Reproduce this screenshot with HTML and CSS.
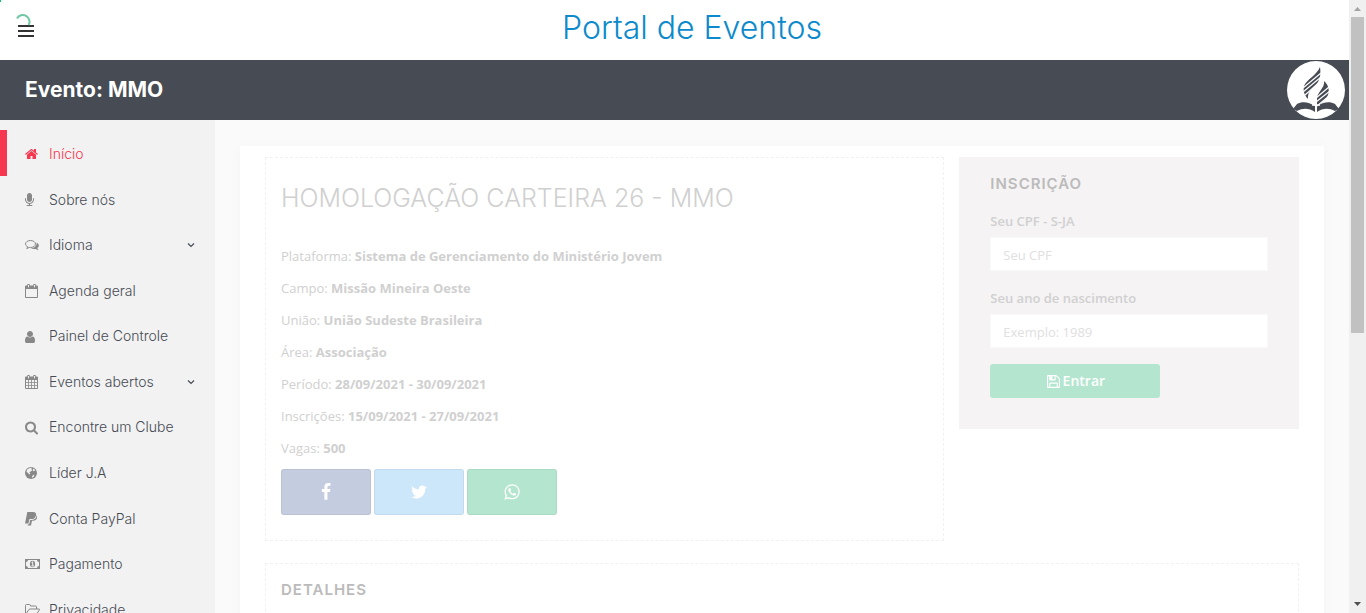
FILE: index.html
```html
<!DOCTYPE html>
<html lang="pt-BR">
<head>
<meta charset="utf-8">
<title>Portal de Eventos</title>
<link rel="stylesheet" href="styles.css">
</head>
<body>
<div class="page">
  <header class="topbar">
    <button class="menu-toggle" type="button" aria-label="Menu"><span></span><span></span><span></span></button>
    <a class="brand" href="#">Portal de Eventos</a>
    <div class="progress"></div>
    <svg class="spinner" viewBox="0 0 16 16" aria-hidden="true"><path d="M2 4.400A6.500 6.500 0 0 1 13.600 11" fill="none" stroke="#70c7a4" stroke-width="2"/></svg>
  </header>
  <div class="eventbar">
    <h1 class="event-name">Evento: MMO</h1>
    <svg class="logo" viewBox="0 0 58 58" role="img" aria-label="Igreja Adventista">
      <circle cx="29" cy="29" r="29" fill="#fff"/>
      <g fill="#474b54">
        <path d="M33 6C34 13 33 17 31 21C28 26 20 29 21 38C17 34 16 29 17 25C20 18 30 14 33 6Z"/>
        <path d="M37 20C42 24 43 31 40 36C37 41 31 43 30 49V37C31 30 38 27 37 20Z"/>
        <path d="M10 43C15 40 22 41 28 45V51C22 47 16 47 10 50L6 48Z"/>
        <path d="M48 43C43 40 36 41 30 45V51C36 47 42 47 48 50L52 48Z"/>
      </g>
      <g fill="none" stroke="#fff" stroke-width="1.200">
        <path d="M16 27L34 12M16 31L34 16M18 34L34 20"/>
        <path d="M29 37L42 26M29 41L43 30M30 45L42 35"/>
        <path d="M29 37V52M25 44H33" stroke-width="1.600"/>
      </g>
    </svg>
  </div>
  <div class="body">
    <nav class="sidebar">
      <a class="item active" href="#"><svg viewBox="64 0 1792 1792"><path d="M1472 992v480q0 26-19 45t-45 19h-384v-384h-256v384h-384q-26 0-45-19t-19-45v-480q0-1 .5-3t.5-3l575-474 575 474q1 2 1 6zm223-69l-62 74q-8 9-21 11h-3q-13 0-21-7l-692-577-692 577q-12 8-24 7-13-2-21-11l-62-74q-8-10-7-23.5t11-21.5l719-599q32-26 76-26t76 26l244 204v-195q0-14 9-23t23-9h192q14 0 23 9t9 23v408l219 182q10 8 11 21.5t-7 23.5z"/></svg><span>Início</span></a>
      <a class="item" href="#"><svg viewBox="320 0 1792 1792"><path d="M1472 704v128q0 221-147.500 384.500t-364.500 187.500v132h256q26 0 45 19t19 45-19 45-45 19h-640q-26 0-45-19t-19-45 19-45 45-19h256v-132q-217-24-364.500-187.500t-147.500-384.500v-128q0-26 19-45t45-19 45 19 19 45v128q0 185 131.500 316.500t316.500 131.500 316.500-131.500 131.500-316.500v-128q0-26 19-45t45-19 45 19 19 45zm-256-384v512q0 132-94 226t-226 94-226-94-94-226v-512q0-132 94-226t226-94 226 94 94 226z"/></svg><span>Sobre nós</span></a>
      <a class="item" href="#"><svg viewBox="0 0 14 14"><path d="M5.500 2.500C8.300 2.500 10.500 4.100 10.500 6S8.300 9.500 5.500 9.500L4.200 9.400L1.800 10.600L2.700 8.700C1.400 8.100.5 7.100.5 6C.5 4.100 2.700 2.500 5.500 2.500Z" fill="none" stroke="currentColor"/><path d="M11.700 4.500C14.300 5.900 14.600 8.700 12.300 10.100L13.500 12.200L10.400 10.900C8.500 11.200 6.700 10.900 5.500 10.200C9 10.400 12 8 11.700 4.500Z"/></svg><span>Idioma</span><svg class="chevron" viewBox="0 0 8 8"><path d="M1 2.500L4 5.500L7 2.500" fill="none" stroke="#474b54" stroke-width="1.200"/></svg></a>
      <a class="item" href="#"><svg viewBox="0 0 14 14"><path fill-rule="evenodd" d="M0 2.500Q0 1.500 1 1.500H12Q13 1.500 13 2.500V13Q13 14 12 14H1Q0 14 0 13ZM1 5V13H12V5Z"/><path d="M3.500 1V3.500M9.500 1V3.500" stroke="currentColor" stroke-width="2.600" stroke-linecap="round"/><path d="M3.500 1V3.300M9.500 1V3.300" stroke="#f2f2f2"/></svg><span>Agenda geral</span></a>
      <a class="item" href="#"><svg viewBox="256 0 1792 1792"><path d="M1536 1399q0 109-62.500 187t-150.500 78h-854q-88 0-150.500-78t-62.500-187q0-85 8.500-160.500t31.500-152 58.500-131 94-89 134.500-34.500q131 128 313 128t313-128q76 0 134.500 34.500t94 89 58.500 131 31.500 152 8.500 160.500zm-256-887q0 159-112.500 271.500t-271.500 112.500-271.500-112.500-112.500-271.500 112.500-271.500 271.500-112.500 271.500 112.500 112.500 271.500z"/></svg><span>Painel de Controle</span></a>
      <a class="item" href="#"><svg viewBox="0 0 14 14"><path fill-rule="evenodd" d="M0 2.500Q0 1.500 1 1.500H12Q13 1.500 13 2.500V13Q13 14 12 14H1Q0 14 0 13ZM1 5V7H3.200V5ZM4 5V7H6.200V5ZM7 5V7H9.200V5ZM10 5V7H12V5ZM1 7.800V10H3.200V7.800ZM4 7.800V10H6.200V7.800ZM7 7.800V10H9.200V7.800ZM10 7.800V10H12V7.800ZM1 10.800V13H3.200V10.800ZM4 10.800V13H6.200V10.800ZM7 10.800V13H9.200V10.800ZM10 10.800V13H12V10.800Z"/><path d="M3.500 1V3.500M9.500 1V3.500" stroke="currentColor" stroke-width="2.600" stroke-linecap="round"/><path d="M3.500 1V3.300M9.500 1V3.300" stroke="#f2f2f2"/></svg><span>Eventos abertos</span><svg class="chevron" viewBox="0 0 8 8"><path d="M1 2.500L4 5.500L7 2.500" fill="none" stroke="#474b54" stroke-width="1.200"/></svg></a>
      <a class="item" href="#"><svg viewBox="64 64 1792 1792"><path d="M1216 832q0-185-131.500-316.500t-316.500-131.500-316.500 131.500-131.500 316.500 131.500 316.500 316.500 131.500 316.500-131.500 131.500-316.500zm512 832q0 52-38 90t-90 38q-54 0-90-38l-343-342q-179 124-399 124-143 0-273.500-55.500t-225-150-150-225-55.500-273.500 55.500-273.500 150-225 225-150 273.500-55.500 273.500 55.500 225 150 150 225 55.500 273.500q0 220-124 399l343 343q37 37 37 90z"/></svg><span>Encontre um Clube</span></a>
      <a class="item" href="#"><svg viewBox="0 0 14 14"><circle cx="6" cy="7" r="6"/><path d="M4.200 2.200L7 1.700L6.200 3.300L7.400 4L5.800 5.500L4.200 6L5.200 7.200L4.500 8.500L1.500 5.400L2.200 3.600ZM8.500 2.500L10.300 4.200L8.800 5.200L7.700 4.400ZM7 10L9.300 8.400L9 10.500L7.200 11.800Z" fill="#f2f2f2"/></svg><span>Líder J.A</span></a>
      <a class="item" href="#"><svg viewBox="0 0 14 14"><path d="M2.300 0H8.200C10.500 0 11.500 1.400 11 3.500C10.500 6 8.800 7.100 6.300 7.100H4.500L3.500 11.500H0Z"/><path d="M11.700 3C13 6 11.300 8.700 8.200 8.700H7L6 13.500H2.600L2.900 12.200H4.200L5.200 7.900H6.800C9.800 7.900 11.700 6 11.700 3Z"/></svg><span>Conta PayPal</span></a>
      <a class="item" href="#"><svg class="wide" viewBox="0 0 15 14"><path fill-rule="evenodd" d="M0 2H15V12H0ZM3 3A2 2 0 0 1 1 5V9A2 2 0 0 1 3 11H12A2 2 0 0 1 14 9V5A2 2 0 0 1 12 3Z"/><ellipse cx="7.500" cy="7" rx="2.600" ry="3.200"/><path d="M6.500 5.500L7.700 4.800V8.700M6.300 9H9" fill="none" stroke="#f2f2f2"/></svg><span>Pagamento</span></a>
      <a class="item" href="#"><svg class="wide" viewBox="0 0 15 14"><path d="M.5 11V2.500Q.5 1.500 1.500 1.500H4.500Q5.500 1.500 5.500 3H10.500Q11.500 3 11.500 4V6M.8 11.500L3.500 7Q4 6 5 6H14Q15 6 14.300 7L12 10.500Q11.300 11.500 10.300 11.500H1.500Q.5 11.500.5 10.500" fill="none" stroke="currentColor"/></svg><span>Privacidade</span></a>
    </nav>
    <main class="content">
      <div class="card">
        <div class="columns">
          <section class="panel">
            <h2 class="title">HOMOLOGAÇÃO CARTEIRA 26 - MMO</h2>
            <p>Plataforma: <b>Sistema de Gerenciamento do Ministério Jovem</b></p>
            <p>Campo: <b>Missão Mineira Oeste</b></p>
            <p>União: <b>União Sudeste Brasileira</b></p>
            <p>Área: <b>Associação</b></p>
            <p>Período: <b>28/09/2021 - 30/09/2021</b></p>
            <p>Inscrições: <b>15/09/2021 - 27/09/2021</b></p>
            <p>Vagas: <b>500</b></p>
            <div class="share">
              <button class="share-btn facebook" type="button" aria-label="Facebook"><svg viewBox="0 0 1792 1792"><path d="M1343 12v264h-157q-86 0-116 36t-30 108v189h293l-39 296h-254v759h-306v-759h-255v-296h255v-218q0-186 104-288.500t277-102.500q147 0 228 12z"/></svg></button>
              <button class="share-btn twitter" type="button" aria-label="Twitter"><svg viewBox="0 0 1792 1792"><path d="M1684 408q-67 98-162 167 1 14 1 42 0 130-38 259.500t-115.500 248.500-184.500 210.500-258 146-323 54.500q-271 0-496-145 35 4 78 4 225 0 401-138-105-2-188-64.500t-114-159.500q33 5 61 5 43 0 85-11-112-23-185.500-111.500t-73.500-205.500v-4q68 38 146 41-66-44-105-115t-39-154q0-88 44-163 121 149 294.500 238.500t371.500 99.500q-8-38-8-74 0-134 94.500-228.500t228.500-94.500q140 0 236 102 109-21 205-78-37 115-142 178 93-10 186-50z"/></svg></button>
              <button class="share-btn whatsapp" type="button" aria-label="WhatsApp"><svg viewBox="0 0 1792 1792"><path d="M1113 974q13 0 97.500 44t89.500 53q2 5 2 15 0 33-17 76-16 39-71 65.500t-102 26.500q-57 0-190-62-98-45-170-118t-148-185q-72-107-71-194v-8q3-91 74-158 24-22 52-22 6 0 18 1.500t19 1.500q19 0 26.500 6.500t15.500 27.500q8 20 33 88t25 75q0 21-34.500 57.500t-34.500 46.500q0 7 5 15 34 73 102 137 56 53 151 101 12 7 22 7 15 0 54-48.500t52-48.500zm-203 530q127 0 243.500-50t200.500-134 134-200.500 50-243.500-50-243.500-134-200.500-200.500-134-243.500-50-243.500 50-200.500 134-134 200.500-50 243.500q0 203 120 368l-79 233 242-77q158 104 345 104zm0-1382q153 0 292.500 60t240.500 161 161 240.500 60 292.500-60 292.500-161 240.500-240.500 161-292.500 60q-195 0-365-94l-417 134 136-405q-108-178-108-389 0-153 60-292.500t161-240.500 240.500-161 292.500-60z"/></svg></button>
            </div>
          </section>
          <form class="signup">
            <h3 class="heading">INSCRIÇÃO</h3>
            <label for="cpf">Seu CPF - S-JA</label>
            <input id="cpf" type="text" placeholder="Seu CPF">
            <label for="year">Seu ano de nascimento</label>
            <input id="year" type="text" placeholder="Exemplo: 1989">
            <button class="submit" type="button"><svg viewBox="0 0 1792 1792"><path d="M512 1536h768v-384h-768v384zm896 0h128v-896q0-14-10-38.500t-20-34.500l-281-281q-10-10-34-20t-39-10v416q0 40-28 68t-68 28h-576q-40 0-68-28t-28-68v-416h-128v1280h128v-416q0-40 28-68t68-28h832q40 0 68 28t28 68v416zm-384-928v-320q0-13-9.500-22.500t-22.500-9.500h-192q-13 0-22.500 9.500t-9.500 22.500v320q0 13 9.500 22.500t22.500 9.500h192q13 0 22.500-9.500t9.500-22.500zm640 32v928q0 40-28 68t-68 28h-1344q-40 0-68-28t-28-68v-1344q0-40 28-68t68-28h928q40 0 88 20t76 48l280 280q28 28 48 76t20 88z"/></svg>Entrar</button>
          </form>
        </div>
        <section class="panel details">
          <h3 class="heading">DETALHES</h3>
        </section>
      </div>
    </main>
  </div>
</div>
<div class="scrollbar" aria-hidden="true">
  <svg viewBox="0 0 17 17"><path d="M5 11H12L8.500 7Z" fill="#a3a3a3"/></svg>
  <div class="track"><div class="thumb"></div></div>
  <svg viewBox="0 0 17 17"><path d="M5 6H12L8.500 10Z" fill="#505050"/></svg>
</div>
</body>
</html>
```

FILE: styles.css
```css
* { box-sizing: border-box; }
body {
  margin: 0;
  height: 100vh;
  display: flex;
  overflow: hidden;
  background: #fafafa;
  font: 13px/20px "Open Sans", sans-serif;
  color: #d0d0d0;
}
h1, h2, h3, p { margin: 0; }
a { text-decoration: none; }
svg { display: block; fill: currentColor; flex: none; }
button { border: 0; padding: 0; font: inherit; }

.page { flex: 1; min-width: 0; display: flex; flex-direction: column; }

.topbar {
  position: relative;
  height: 60px;
  flex: none;
  display: grid;
  grid-template-columns: 1fr auto 1fr;
  background: #fff;
}
.menu-toggle {
  justify-self: start;
  align-self: start;
  margin: 25px 0 0 18px;
  display: grid;
  gap: 3px;
  width: 16px;
  background: none;
}
.menu-toggle span { height: 2px; background: #333; }
.brand {
  grid-column: 2;
  padding-top: 8px;
  padding-left: 35px;
  font: 300 32px/40px Inter, sans-serif;
  color: #0d8acb;
}
.progress {
  position: absolute;
  top: 0;
  left: 0;
  width: 1px;
  height: 2px;
  background: #29b67a;
  box-shadow: 0 0 4px #29b67a;
}
.spinner { position: absolute; top: 14px; left: 15px; width: 16px; height: 16px; }

.eventbar {
  height: 60px;
  flex: none;
  display: flex;
  align-items: center;
  justify-content: space-between;
  padding: 0 4px 0 25px;
  background: #474b54;
}
.event-name { font: 700 21px/28px Inter, sans-serif; color: #fff; }
.logo { width: 58px; height: 58px; }

.body { flex: 1; min-height: 0; display: flex; overflow: hidden; }
.sidebar { width: 215px; flex: none; padding-top: 10px; background: #f2f2f2; }
.item {
  display: flex;
  align-items: center;
  gap: 10px;
  padding: 15px 20px 12px 25px;
  font: 300 14px/1.327 Inter, sans-serif;
  color: #474b54;
}
.item svg { width: 14px; height: 14px; color: #888; }
.item svg.wide { width: 15px; margin-right: -1px; }
.item svg.chevron { width: 8px; height: 8px; margin-left: auto; }
.item.active { padding-left: 18px; border-left: 7px solid #f7364f; color: #f7364f; }
.item.active svg { color: #f7364f; }

.content { flex: 1; min-width: 0; padding: 26px 25px 0; }
.card {
  height: 800px;
  padding: 11px 25px;
  background: #fff;
  box-shadow: 0 1px 10px #f5f5f5;
}
.columns { display: grid; grid-template-columns: 2fr 1fr; gap: 15px; align-items: start; }
.panel { border: 1px dashed #f1f1f1; padding: 20px 15px 25px; }
.title {
  margin-bottom: 22px;
  font: 300 25px/40px Inter, sans-serif;
}
.panel p { line-height: 32px; }
.panel b { font-weight: 700; }
.share { display: flex; gap: 3px; padding-top: 5px; }
.share-btn {
  width: 90px;
  height: 46px;
  display: grid;
  place-items: center;
  border: 1px solid rgba(0, 0, 0, 0.05);
  border-radius: 3px;
  color: #fff;
}
.share-btn svg { width: 18px; height: 18px; }
.facebook { background: #c4cce0; }
.twitter { background: #cce6fa; }
.whatsapp { background: #b4e6cf; }

.signup { padding: 17px 31px 31px; background: #f5f3f4; }
.heading {
  font: 600 15px/20px Inter, sans-serif;
  letter-spacing: 1px;
  color: #bbb;
}
.signup label { display: block; margin: 17px 0 6px; font-weight: 600; }
.signup input {
  display: block;
  width: 100%;
  height: 34px;
  padding: 2px 12px 0;
  border: 1px solid #faf9fa;
  background: #fff;
  font: inherit;
}
.signup input::placeholder { color: #e0e0e0; opacity: 1; }
.submit {
  display: flex;
  align-items: center;
  justify-content: center;
  gap: 2px;
  width: 170px;
  height: 34px;
  margin-top: 16px;
  border-radius: 3px;
  background: #b4e6cf;
  font-size: 14px;
  font-weight: 600;
  color: #fff;
}
.submit svg { width: 15px; height: 15px; }
.details { margin-top: 22px; height: 180px; padding-top: 16px; }

.scrollbar { width: 17px; flex: none; display: flex; flex-direction: column; background: #f0f0f0; }
.scrollbar svg { width: 17px; height: 17px; }
.track { flex: 1; padding: 0 2px; }
.thumb { height: 54.600%; background: #c1c1c1; }
```
